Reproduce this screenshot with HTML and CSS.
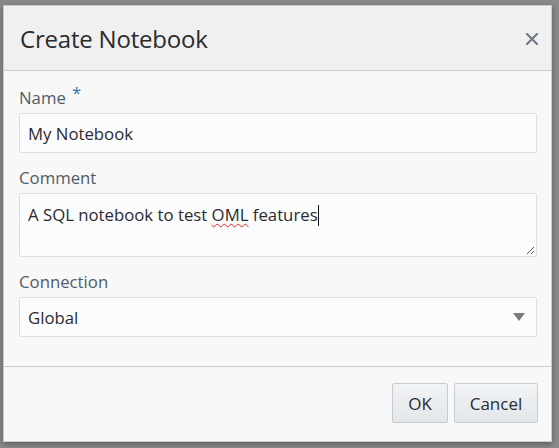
FILE: index.html
```html
<!DOCTYPE html>
<html>
<head>
<meta charset="utf-8">
<link rel="stylesheet" href="styles.css">
</head>
<body>
<div class="dialog">
  <div class="dialog-header">
    <h1 class="title">Create Notebook</h1>
    <span class="close" aria-label="Close">
      <svg width="12" height="12" viewBox="0 0 12 12"><path d="M1 1 L11 11 M11 1 L1 11" stroke="#6f7a85" stroke-width="2.2" stroke-linecap="square"/></svg>
    </span>
  </div>
  <div class="dialog-body">
    <div class="field">
      <label class="label">Name <span class="req">*</span></label>
      <div class="input">My Notebook</div>
    </div>
    <div class="field">
      <label class="label">Comment</label>
      <div class="input textarea">A SQL notebook to test <span class="spell">OML</span> features<span class="caret"></span>
        <svg class="grip" width="10" height="10" viewBox="0 0 10 10"><path d="M9 2 L2 9 M9 6 L6 9" stroke="#555" stroke-width="1"/></svg>
      </div>
    </div>
    <div class="field">
      <label class="label">Connection</label>
      <div class="input select">Global
        <svg class="arrow" width="12" height="8" viewBox="0 0 12 8"><path d="M0 0 H12 L6 8 Z" fill="#7b7b7b"/></svg>
      </div>
    </div>
  </div>
  <div class="dialog-footer">
    <button class="btn btn-ok">OK</button>
    <button class="btn btn-cancel">Cancel</button>
  </div>
</div>
</body>
</html>
```
FILE: styles.css
```css
html, body {
  margin: 0;
  padding: 0;
}
body {
  width: 559px;
  height: 448px;
  background: #8a8a8a;
  font-family: "Open Sans", "Noto Sans", sans-serif;
  overflow: hidden;
}
.dialog {
  box-sizing: border-box;
  margin: 5px 0 0 3px;
  width: 549px;
  height: 437px;
  border: 1px solid #c3ccd6;
  background: #f8f8f8;
  box-shadow: 0 2px 6px rgba(0,0,0,0.35);
  display: flex;
  flex-direction: column;
}
.dialog-header {
  height: 64px;
  background: #f0f0f0;
  border-bottom: 1px solid #c3ccd6;
  display: flex;
  align-items: center;
  justify-content: space-between;
  padding: 0 13px 0 16px;
}
.title {
  margin: 0;
  font-weight: 400;
  font-size: 24px;
  color: #2b2b2b;
  letter-spacing: -0.2px;
}
.close {
  display: flex;
  margin-top: 2px;
}
.dialog-body {
  flex: 1;
  padding: 16px 14px 0 15px;
  display: flex;
  flex-direction: column;
  gap: 14px;
}
.field {
  display: flex;
  flex-direction: column;
  gap: 4px;
}
.label {
  font-size: 16.75px;
  line-height: 22px;
  color: #505b66;
}
.req {
  color: #3070b0;
  font-size: 16px;
  position: relative;
  top: -5px;
  margin-left: 2px;
}
.input {
  box-sizing: border-box;
  height: 40px;
  border: 1px solid #dcdfe2;
  border-radius: 2px;
  background: #fbfcfe;
  font-size: 16.75px;
  color: #2b2b2b;
  padding: 0 8px;
  display: flex;
  align-items: center;
  position: relative;
}
.textarea {
  height: 64px;
  align-items: flex-start;
  padding-top: 10px;
  line-height: 22px;
  display: block;
}
.spell {
  text-decoration: underline wavy #e02020;
  text-decoration-thickness: 1px;
  text-underline-offset: 2px;
}
.caret {
  display: inline-block;
  width: 1px;
  height: 21px;
  background: #111;
  vertical-align: -5px;
}
.grip {
  position: absolute;
  right: 1px;
  bottom: 1px;
}
.select {
  justify-content: space-between;
  padding-right: 11px;
}
.dialog-footer {
  height: 75px;
  border-top: 1px solid #c3ccd6;
  box-sizing: border-box;
  display: flex;
  justify-content: flex-end;
  align-items: flex-start;
  gap: 6px;
  padding: 16px 13px 0 0;
}
.btn {
  box-sizing: border-box;
  height: 40px;
  border: 1px solid #c6ccd2;
  border-radius: 2px;
  background: linear-gradient(#f1f3f5, #e3e7ea);
  font-family: inherit;
  font-size: 17px;
  color: #2b2b2b;
  padding: 0;
}
.btn-ok { width: 56px; }
.btn-cancel { width: 84px; }
```
